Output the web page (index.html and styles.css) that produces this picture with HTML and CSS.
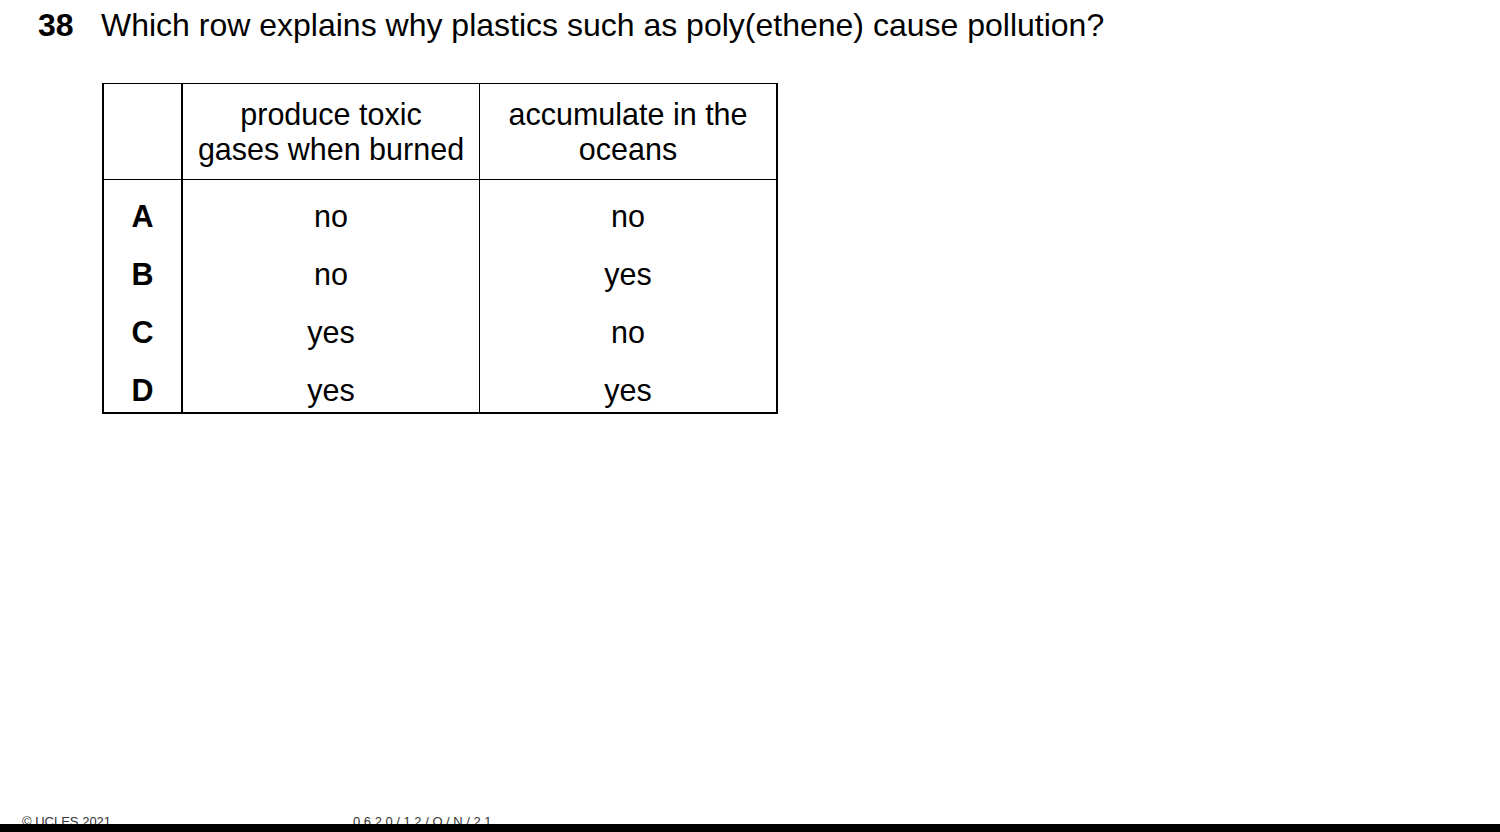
FILE: index.html
```html
<!DOCTYPE html>
<html lang="en">
<head>
<meta charset="utf-8">
<title>Question 38</title>
<link rel="stylesheet" href="styles.css">
</head>
<body>
<div class="page">
  <main class="content">
    <h1 class="question"><span class="qnum">38</span><span class="qtext">Which row explains why plastics such as poly(ethene) cause pollution?</span></h1>
    <table class="answers">
      <thead>
        <tr>
          <th class="c1"></th>
          <th class="c2">produce toxic<br>gases when burned</th>
          <th class="c3">accumulate in the<br>oceans</th>
        </tr>
      </thead>
      <tbody>
        <tr><td class="c1 key">A</td><td class="c2">no</td><td class="c3">no</td></tr>
        <tr><td class="c1 key">B</td><td class="c2">no</td><td class="c3">yes</td></tr>
        <tr><td class="c1 key">C</td><td class="c2">yes</td><td class="c3">no</td></tr>
        <tr><td class="c1 key">D</td><td class="c2">yes</td><td class="c3">yes</td></tr>
      </tbody>
    </table>
  </main>
  <footer class="footer">
    <div class="footer-text">
      <span class="f-left">© UCLES 2021</span>
      <span class="f-mid">0620/12/O/N/21</span>
    </div>
    <div class="footer-bar"></div>
  </footer>
</div>
</body>
</html>
```

FILE: styles.css
```css
html, body {
  margin: 0;
  padding: 0;
  background: #fff;
}

body {
  font-family: "Liberation Sans", Arial, sans-serif;
  color: #000;
}

.page {
  width: 1500px;
  height: 832px;
  display: flex;
  flex-direction: column;
  overflow: hidden;
}

.content {
  flex: 1;
  padding-top: 8px;
}

.question {
  margin: 0;
  font-size: 32px;
  font-weight: normal;
  line-height: 34px;
  display: flex;
  padding-left: 38px;
}

.qnum {
  font-weight: bold;
  width: 63px;
  flex: none;
}

.qtext {
  white-space: nowrap;
}

.answers {
  margin: 41px 0 0 102px;
  border-collapse: separate;
  border-spacing: 0;
  table-layout: fixed;
  width: 676px;
  box-sizing: border-box;
  border-top: 1px solid #000;
  border-left: 2px solid #000;
  border-right: 2px solid #000;
  border-bottom: 2px solid #000;
  font-size: 30.5px;
}

.answers th,
.answers td {
  box-sizing: border-box;
  padding: 0;
  text-align: center;
  font-weight: normal;
}

.answers .c1 {
  width: 79px;
  border-right: 2px solid #000;
}

.answers .c2 {
  width: 297px;
  border-right: 1px solid #000;
}

.answers .c3 {
  width: 296px;
}

.answers thead th {
  height: 96px;
  line-height: 35px;
  vertical-align: middle;
  border-bottom: 1px solid #000;
}

.answers tbody td {
  padding-top: 14px;
  line-height: 44px;
  height: 58px;
  vertical-align: top;
}

.answers .key {
  font-weight: bold;
}

.footer {
  flex: none;
  display: flex;
  flex-direction: column;
}

.footer-text {
  height: 9px;
  overflow: hidden;
  display: flex;
  font-size: 13px;
  line-height: 14px;
  color: #333;
}

.footer-text span {
  margin-top: 0;
  white-space: nowrap;
}

.f-left {
  margin-left: 22px;
  width: 331px;
}

.f-mid {
  letter-spacing: 3.6px;
}

.footer-bar {
  height: 8px;
  background: #000;
}
```
